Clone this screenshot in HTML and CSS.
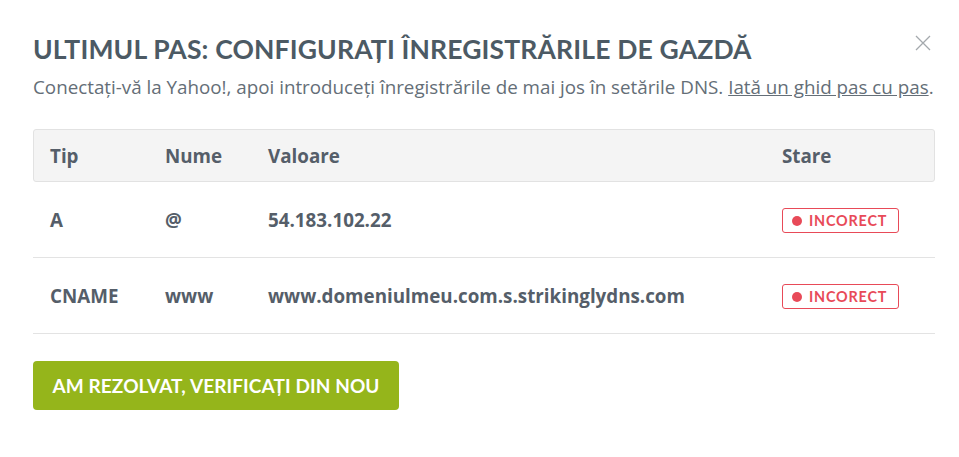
FILE: index.html
```html
<!DOCTYPE html>
<html lang="ro">
<head>
<meta charset="utf-8">
<title>Configurați înregistrările</title>
<link rel="stylesheet" href="styles.css">
</head>
<body>
<div class="modal">
  <button class="close" aria-label="Închide">
    <svg width="16" height="16" viewBox="0 0 16 16"><path d="M1 1L15 15M15 1L1 15" stroke="#a4a9ad" stroke-width="1.3" fill="none"/></svg>
  </button>
  <h1 class="title">ULTIMUL PAS: CONFIGURAȚI ÎNREGISTRĂRILE DE GAZDĂ</h1>
  <p class="subtitle">Conectați-vă la Yahoo!, apoi introduceți înregistrările de mai jos în setările DNS. <a href="#" class="guide">Iată un ghid pas cu pas</a>.</p>
  <div class="table">
    <div class="row head">
      <div class="c-tip">Tip</div>
      <div class="c-name">Nume</div>
      <div class="c-val">Valoare</div>
      <div class="c-state">Stare</div>
    </div>
    <div class="row">
      <div class="c-tip">A</div>
      <div class="c-name">@</div>
      <div class="c-val">54.183.102.22</div>
      <div class="c-state"><span class="badge"><span class="dot"></span>INCORECT</span></div>
    </div>
    <div class="row">
      <div class="c-tip">CNAME</div>
      <div class="c-name">www</div>
      <div class="c-val">www.domeniulmeu.com.s.strikinglydns.com</div>
      <div class="c-state"><span class="badge"><span class="dot"></span>INCORECT</span></div>
    </div>
  </div>
  <button class="verify">AM REZOLVAT, VERIFICAȚI DIN NOU</button>
</div>
</body>
</html>
```

FILE: styles.css
```css
html, body {
  margin: 0;
  padding: 0;
  background: #ffffff;
}

.modal {
  position: relative;
  padding: 32px 24px 0 33px;
  font-family: "Open Sans", "Noto Sans", sans-serif;
}

.close {
  position: absolute;
  top: 35px;
  right: 28px;
  width: 16px;
  height: 16px;
  padding: 0;
  border: 0;
  background: none;
  cursor: pointer;
  display: flex;
}

.title {
  margin: 0;
  font-family: Lato, "Open Sans", sans-serif;
  font-weight: 700;
  font-size: 26.5px;
  line-height: 34px;
  color: #4c5a64;
  letter-spacing: 0.15px;
}

.subtitle {
  margin: 8px 0 0;
  font-size: 18.8px;
  line-height: 26px;
  color: #646e77;
}

.guide {
  color: #646e77;
  text-decoration: underline;
}

.table {
  margin-top: 29px;
  width: 902px;
}

.row {
  display: grid;
  grid-template-columns: 115px 103px 514px 1fr;
  align-items: center;
  height: 75px;
  padding-left: 17px;
  border-bottom: 1px solid #e3e3e3;
  font-weight: 700;
  font-size: 18.8px;
  color: #555e69;
}

.row.head {
  height: 51px;
  background: #f4f4f4;
  border: 1px solid #e2e2e2;
  border-radius: 3px;
  padding-left: 16px;
}

.badge {
  display: inline-flex;
  align-items: center;
  gap: 7px;
  height: 25px;
  box-sizing: border-box;
  padding: 0 11px 0 9px;
  border: 1px solid #e84a58;
  border-radius: 3px;
  color: #e84a58;
  font-family: Lato, "Open Sans", sans-serif;
  font-size: 14.4px;
  font-weight: 700;
  letter-spacing: 0.8px;
}

.dot {
  width: 10px;
  height: 10px;
  border-radius: 50%;
  background: #e84a58;
}

.verify {
  margin-top: 27px;
  width: 366px;
  height: 49px;
  border: 0;
  border-radius: 4px;
  background: #95b51b;
  color: #ffffff;
  font-family: Lato, "Open Sans", sans-serif;
  font-weight: 700;
  font-size: 19px;
  letter-spacing: 0.1px;
  cursor: pointer;
}
```
